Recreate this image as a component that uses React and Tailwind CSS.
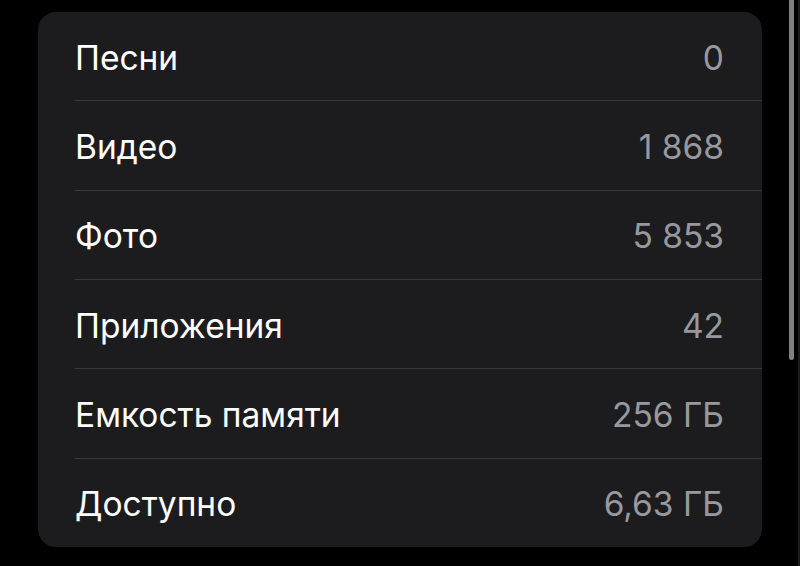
import React from "react";

const rows = [
  ["Песни", "0"],
  ["Видео", "1 868"],
  ["Фото", "5 853"],
  ["Приложения", "42"],
  ["Емкость памяти", "256 ГБ"],
  ["Доступно", "6,63 ГБ"],
];

export default function App() {
  return (
    <div
      className="relative w-[800px] h-[566px] bg-black overflow-hidden pt-[12px] pl-[38px]"
      style={{ fontFamily: '"Inter", "Liberation Sans", sans-serif' }}
    >
      <div className="w-[724px] h-[535px] bg-[#1c1c1e] rounded-[18px] pl-[37px] flex flex-col">
        {rows.map(([label, value], i) => (
          <div
            key={label}
            className={
              "flex-1 flex items-center justify-between pr-[38px] pt-[3px] " +
              (i < rows.length - 1 ? "border-b border-[#38383a]" : "")
            }
          >
            <span className="text-[33.5px] font-normal text-white">{label}</span>
            <span className="text-[33.5px] font-normal text-[#98989f]">{value}</span>
          </div>
        ))}
      </div>
      {/* scroll indicator */}
      <div className="absolute left-[789px] top-0 w-[5px] h-[360px] bg-[#808080] rounded-b-full" />
      <div className="absolute left-[798px] top-0 w-[2px] h-[566px] bg-[#1a1a1a]" />
    </div>
  );
}
